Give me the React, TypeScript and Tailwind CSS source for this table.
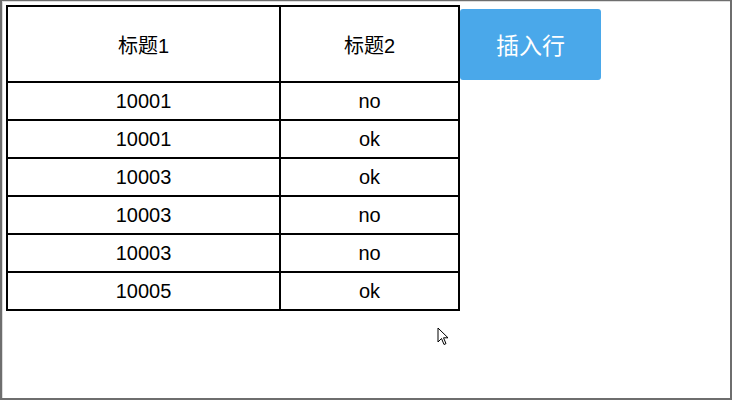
import React from 'react';

const rows = [
  { id: '10001', status: 'no' },
  { id: '10001', status: 'ok' },
  { id: '10003', status: 'ok' },
  { id: '10003', status: 'no' },
  { id: '10003', status: 'no' },
  { id: '10005', status: 'ok' },
];

export default function App() {
  return (
    <div className="relative w-[732px] h-[400px] bg-white border-t border-l-2 border-r-2 border-b-2 border-[#6e6e6e] overflow-hidden font-['Liberation_Sans','Noto_Sans_CJK_SC',sans-serif]">
      <div className="h-full border-t border-l border-[#dcdcdc] pt-[3px] pl-[3px] flex items-start">
        <table className="border-collapse border-2 border-black text-[20px] text-black">
          <thead>
            <tr className="h-[76px]">
              <th className="w-[273px] border-2 border-black font-normal text-center pt-[4px]">标题1</th>
              <th className="w-[179px] border-2 border-black font-normal text-center pt-[4px]">标题2</th>
            </tr>
          </thead>
          <tbody>
            {rows.map((r, i) => (
              <tr key={i} className="h-[38px]">
                <td className="border-2 border-black text-center">{r.id}</td>
                <td className="border-2 border-black text-center">{r.status}</td>
              </tr>
            ))}
          </tbody>
        </table>
        <button className="mt-[4px] w-[141px] h-[71px] pt-[3px] rounded-[3px] bg-[#4aa8ea] text-white text-[23px]">
          插入行
        </button>
      </div>

      <svg className="absolute left-[435px] top-[326px]" width="12" height="19" viewBox="0 0 12 19">
        <path d="M1 1 L1 15 L4.5 11.5 L7 17.5 L9 16.6 L6.5 10.8 L11 10.8 Z" fill="white" stroke="black" strokeWidth="1" strokeLinejoin="round" />
      </svg>
    </div>
  );
}
